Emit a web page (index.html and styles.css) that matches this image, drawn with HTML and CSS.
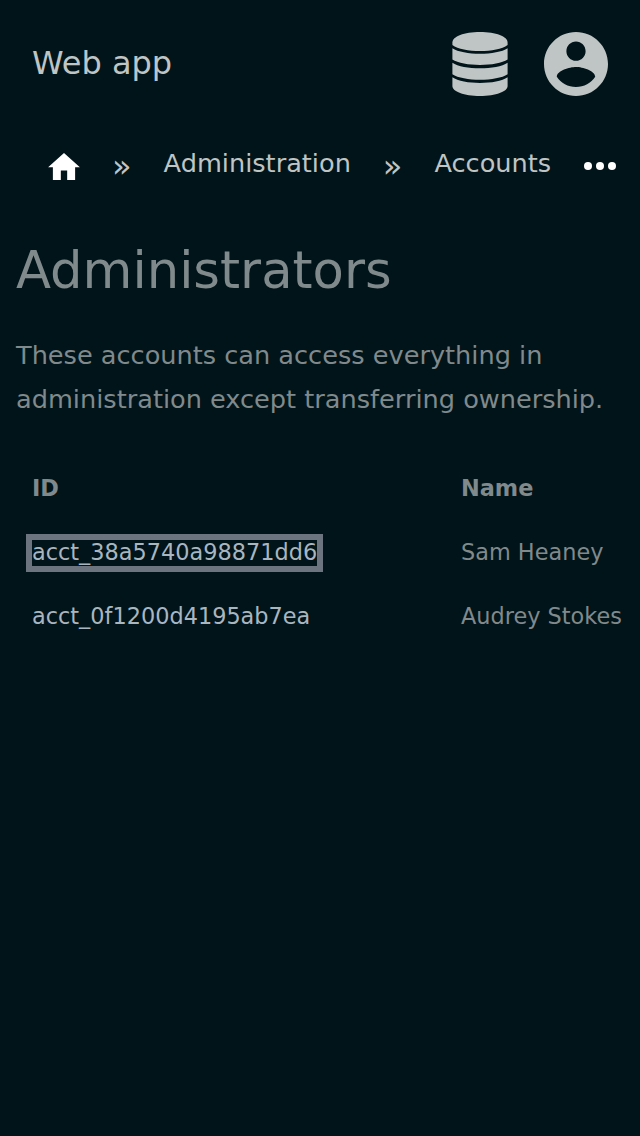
FILE: index.html
```html
<!DOCTYPE html>
<html lang="en">
<head>
<meta charset="utf-8">
<title>Administrators</title>
<link rel="stylesheet" href="styles.css">
</head>
<body>
<header class="topbar">
  <a class="brand">Web app</a>
  <nav class="tools">
    <svg class="tool" viewBox="0 0 64 64">
      <path d="M4.400 10.500C4.400 4.500 16 0 32 0S59.600 4.500 59.600 10.500V13C49 21 15 21 4.400 13Z"/>
      <path d="M4.400 16.200C15 23.500 49 23.500 59.600 16.200V27.600C49 34.800 15 34.800 4.400 27.600Z"/>
      <path d="M4.400 30.700C15 38.200 49 38.200 59.600 30.700V42.200C49 49.500 15 49.500 4.400 42.200Z"/>
      <path d="M4.400 45.300C15 52.900 49 52.900 59.600 45.300V54C59.600 59.500 48 64 32 64S4.400 59.500 4.400 54Z"/>
    </svg>
    <svg class="tool" viewBox="2 2 20 20"><path d="M12 2C6.480 2 2 6.480 2 12s4.480 10 10 10 10-4.480 10-10S17.520 2 12 2zm0 3c1.660 0 3 1.340 3 3s-1.340 3-3 3-3-1.340-3-3 1.340-3 3-3zm0 14.200c-2.500 0-4.710-1.280-6-3.220.030-1.990 4-3.080 6-3.080 1.990 0 5.970 1.090 6 3.080-1.290 1.940-3.500 3.220-6 3.220z"/></svg>
  </nav>
</header>
<nav class="crumbs">
  <svg class="home" viewBox="0 0 20 17"><path d="M8 17v-6h4v6h5V9h3L10 0 0 9h3v8z"/></svg>
  <span class="sep">»</span><a class="crumb">Administration</a>
  <span class="sep">»</span><a class="crumb">Accounts</a>
  <svg class="more" viewBox="0 0 32 8"><circle cx="4" cy="4" r="4"/><circle cx="16" cy="4" r="4"/><circle cx="28" cy="4" r="4"/></svg>
</nav>
<main class="content">
  <h1 class="title">Administrators</h1>
  <p class="lead">These accounts can access everything in administration except transferring ownership.</p>
  <table class="accounts">
    <tr><th class="id">ID</th><th>Name</th></tr>
    <tr><td class="active"><a class="link focused">acct_38a5740a98871dd6</a></td><td>Sam Heaney</td></tr>
    <tr><td><a class="link">acct_0f1200d4195ab7ea</a></td><td>Audrey Stokes</td></tr>
  </table>
</main>
</body>
</html>
```
FILE: styles.css
```css
body { margin: 0; background: #001419; color: #80898b; font-family: "DejaVu Sans", sans-serif; overflow: hidden; }
.topbar { height: 128px; box-sizing: border-box; padding: 0 32px; display: flex; align-items: center; justify-content: space-between; color: #bfc4c5; }
.brand { font-size: 32px; padding-bottom: 2px; }
.tools { display: flex; gap: 32px; }
.tool { width: 64px; height: 64px; fill: #bfc4c5; }
.crumbs { height: 72px; padding-left: 48px; display: flex; align-items: center; color: #bfc4c5; font-size: 25.600px; }
.home { width: 32px; height: 27px; fill: #fff; margin-top: 4px; }
.crumb { padding-bottom: 2px; }
.sep { margin: 0 32px; padding-top: 3px; font-size: 32px; }
.more { width: 32px; height: 8px; margin: 4px 0 0 33px; fill: #fff; }
.content { padding: 0 16px; }
.title { margin: 40px 0 33px; font-size: 51.200px; line-height: 60px; font-weight: 400; }
.lead { margin: 0; font-size: 25.600px; line-height: 44px; }
.accounts { margin-top: 35px; width: 640px; border-collapse: collapse; font-size: 22.400px; text-align: left; white-space: nowrap; }
.accounts th, .accounts td { height: 64px; padding: 0 16px; box-sizing: border-box; }
.accounts .active { padding-top: 2px; }
.id { width: 429px; }
.link { color: #a9b6c0; }
.focused { display: block; width: fit-content; line-height: 24px; padding-bottom: 2px; outline: 6px solid #6c757f; }
```
